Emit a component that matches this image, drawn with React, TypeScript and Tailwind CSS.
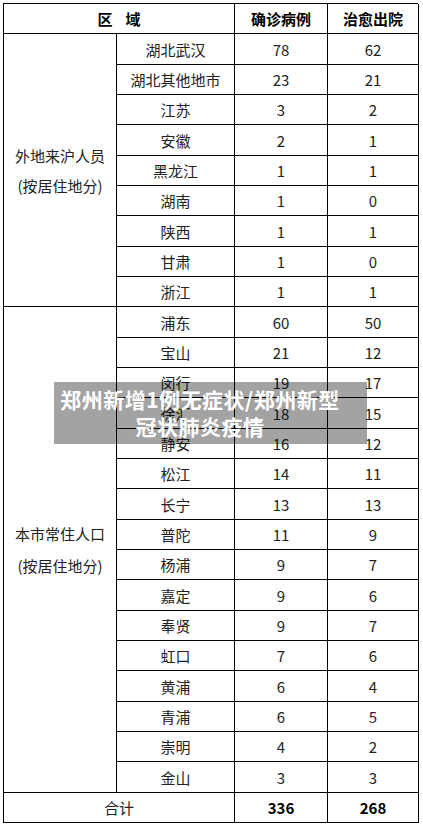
import React from 'react';

const outside = [
  ['湖北武汉', 78, 62],
  ['湖北其他地市', 23, 21],
  ['江苏', 3, 2],
  ['安徽', 2, 1],
  ['黑龙江', 1, 1],
  ['湖南', 1, 0],
  ['陕西', 1, 1],
  ['甘肃', 1, 0],
  ['浙江', 1, 1],
];

const local = [
  ['浦东', 60, 50],
  ['宝山', 21, 12],
  ['闵行', 19, 17],
  ['徐汇', 18, 15],
  ['静安', 16, 12],
  ['松江', 14, 11],
  ['长宁', 13, 13],
  ['普陀', 11, 9],
  ['杨浦', 9, 7],
  ['嘉定', 9, 6],
  ['奉贤', 9, 7],
  ['虹口', 7, 6],
  ['黄浦', 6, 4],
  ['青浦', 6, 5],
  ['崇明', 4, 2],
  ['金山', 3, 3],
];

const cell = 'flex items-center justify-center pt-[2px] border-r border-b border-black';

function Rows({ rows }: { rows: (string | number)[][] }) {
  return (
    <>
      {rows.map(([name, cases, cured]) => (
        <React.Fragment key={name as string}>
          <div className={`${cell} col-start-2`}>{name}</div>
          <div className={cell}>{cases}</div>
          <div className={cell}>{cured}</div>
        </React.Fragment>
      ))}
    </>
  );
}

export default function App() {
  return (
    <div
      className="relative w-[423px] h-[827px] bg-white pt-[3px] pl-[3px] text-[15px] text-[#222]"
      style={{ fontFamily: '"Noto Sans CJK SC", "Noto Sans", sans-serif' }}
    >
      {/* Table */}
      <div className="grid w-[415px] grid-cols-[113px_118px_93px_91px] auto-rows-[30.33px] border-l border-t border-black">
        <div className={`${cell} col-span-2 font-bold text-black`}>
          <span>区</span>
          <span className="ml-[13px]">域</span>
        </div>
        <div className={`${cell} font-bold text-black`}>确诊病例</div>
        <div className={`${cell} font-bold text-black`}>治愈出院</div>

        <div className={`${cell} row-span-9 flex-col gap-[8px]`}>
          <span>外地来沪人员</span>
          <span>(按居住地分)</span>
        </div>
        <Rows rows={outside} />

        <div className={`${cell} row-span-16 flex-col gap-[10px]`}>
          <span>本市常住人口</span>
          <span>(按居住地分)</span>
        </div>
        <Rows rows={local} />

        <div className={`${cell} col-span-2`}>合计</div>
        <div className={`${cell} font-bold text-black`}>336</div>
        <div className={`${cell} font-bold text-black`}>268</div>
      </div>

      {/* Caption overlay */}
      <div className="absolute left-[54px] top-[382px] w-[313px] h-[62px] bg-black/[0.36] flex flex-col items-center justify-center pr-[21px] text-white font-bold text-[21px] leading-[27px] tracking-[0.5px]">
        <span>郑州新增1例无症状/郑州新型</span>
        <span>冠状肺炎疫情</span>
      </div>
    </div>
  );
}
